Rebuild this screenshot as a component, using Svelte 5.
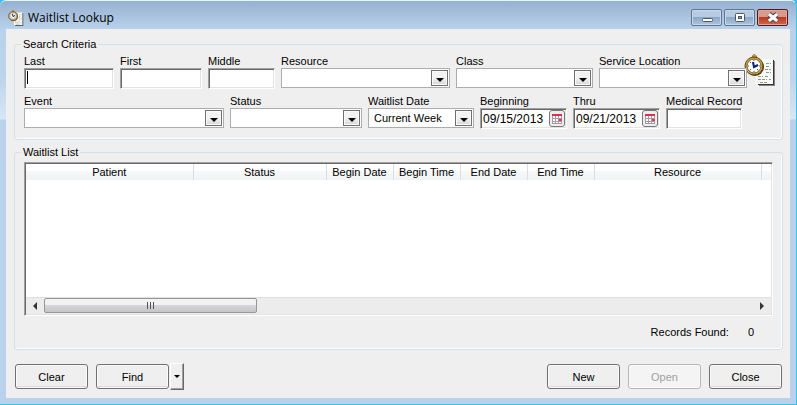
<script lang="ts">
    let last = $state('');
    let first = $state('');
    let middle = $state('');
    let medicalRecord = $state('');
    let beginning = $state('09/15/2013');
    let thru = $state('09/21/2013');
    let waitlistDate = $state('Current Week');
    let recordsFound = $state(0);

    const columns = [
        { title: 'Patient', width: 167 },
        { title: 'Status', width: 133 },
        { title: 'Begin Date', width: 67 },
        { title: 'Begin Time', width: 67 },
        { title: 'End Date', width: 67 },
        { title: 'End Time', width: 67 },
        { title: 'Resource', width: 167 }
    ];
</script>

{#snippet waitlistIcon()}
    <svg class="waitlist-icon" viewBox="0 0 32 32" aria-hidden="true">
        <path d="M15 7h16v25H15z" fill="#85858a" />
        <path d="M14 6h16v25H14z" fill="#33333a" />
        <path d="M12 5h17v25H12z" fill="#f8faf4" />
        <path d="M22 9.500h5M22 12.500h3M21 15.500h6M22 18.500h5M14 22.500h5M21 22.500h4M14 25.500h9M25 25.500h2M16 28.500h8" stroke="#8b9690" stroke-width="1" stroke-dasharray="3 1" />
        <path d="M8 2l2-2 3 2-1 3H9z" fill="#8a6418" />
        <path d="M9 2h3" stroke="#f0cf68" />
        <circle cx="11" cy="13" r="9" fill="#51401c" />
        <circle cx="10" cy="12" r="9" fill="#d6aa4c" stroke="#59420f" stroke-width="1" />
        <circle cx="10" cy="12" r="7" fill="#f8fbff" stroke="#7a5a1a" stroke-width="1" />
        <path d="M10 6v1M10 17v1M4 12h1M15 12h1M6 8l1 1M6 16l1-1M14 16l-1-1" stroke="#555" />
        <path d="M9 8l1 5 4-2" fill="none" stroke="#111a6b" stroke-width="2" />
    </svg>
{/snippet}

{#snippet dropdown(id, label, value)}
    <div class="field">
        <label for={id}>{label}</label>
        <div class="combo">
            <select {id}>
                <option>{value}</option>
            </select>
            <span class="combo-button"><i class="arrow-down"></i></span>
        </div>
    </div>
{/snippet}

{#snippet calendarButton(label)}
    <button class="calendar" type="button" aria-label={label}>
        <svg viewBox="0 0 12 12" aria-hidden="true">
            <path d="M1 1h10v10H1z" fill="#fff" />
            <path d="M1 5.500h10M1 8.500h10M1 10.500h10M1.500 3v8M4.500 3v8M7.500 3v8M10.500 3v8" stroke="#a79aa0" stroke-width="1" />
            <path d="M1 1h10v2H1z" fill="#dd3050" />
            <path d="M8 6h3v2H8z" fill="#e0405c" />
        </svg>
    </button>
{/snippet}

<div class="window">
    <header class="title-bar">
        <span class="small-icon">{@render waitlistIcon()}</span>
        <h1>Waitlist Lookup</h1>
        <div class="window-buttons">
            <button type="button" aria-label="Minimize">
                <svg viewBox="0 0 16 12"><rect x="3.500" y="6.500" width="10" height="3" rx="1" fill="#fff" stroke="#4c5665" /></svg>
            </button>
            <button type="button" aria-label="Restore">
                <svg viewBox="0 0 16 12"><rect x="3.500" y="1.500" width="9" height="8" rx="1" fill="#fff" stroke="#4c5665" /><rect x="6.500" y="4.500" width="3" height="2" fill="#8da9c9" stroke="#4c5665" /></svg>
            </button>
            <button class="close" type="button" aria-label="Close window">
                <svg viewBox="0 0 16 12"><path d="M4 2l8 7M12 2l-8 7" stroke="#5a4b55" stroke-width="5" /><path d="M5 3l6 5M11 3l-6 5" stroke="#fff" stroke-width="3" stroke-linecap="square" /></svg>
            </button>
        </div>
    </header>

    <main>
        <fieldset>
            <legend>Search Criteria</legend>
            <div class="criteria-top">
                <div class="row row-one">
                    <div class="field">
                        <label for="last">Last</label>
                        <div class="text-box">
                            <input id="last" type="text" bind:value={last} />
                            <span class="caret"></span>
                        </div>
                    </div>
                    <div class="field">
                        <label for="first">First</label>
                        <div class="text-box"><input id="first" type="text" bind:value={first} /></div>
                    </div>
                    <div class="field">
                        <label for="middle">Middle</label>
                        <div class="text-box"><input id="middle" type="text" bind:value={middle} /></div>
                    </div>
                    {@render dropdown('resource', 'Resource', '')}
                    {@render dropdown('class', 'Class', '')}
                    {@render dropdown('location', 'Service Location', '')}
                </div>
                {@render waitlistIcon()}
            </div>
            <div class="row row-two">
                {@render dropdown('event', 'Event', '')}
                {@render dropdown('status', 'Status', '')}
                {@render dropdown('waitlist-date', 'Waitlist Date', waitlistDate)}
                <div class="field">
                    <label for="beginning">Beginning</label>
                    <div class="text-box date">
                        <input id="beginning" type="text" bind:value={beginning} />
                        {@render calendarButton('Pick beginning date')}
                    </div>
                </div>
                <div class="field">
                    <label for="thru">Thru</label>
                    <div class="text-box date">
                        <input id="thru" type="text" bind:value={thru} />
                        {@render calendarButton('Pick thru date')}
                    </div>
                </div>
                <div class="field">
                    <label for="medical-record">Medical Record</label>
                    <div class="text-box"><input id="medical-record" type="text" bind:value={medicalRecord} /></div>
                </div>
            </div>
        </fieldset>

        <fieldset class="results">
            <legend>Waitlist List</legend>
            <div class="list">
                <table>
                    <colgroup>
                        {#each columns as column}
                            <col style="width: {column.width}px" />
                        {/each}
                        <col />
                    </colgroup>
                    <thead>
                        <tr>
                            {#each columns as column}
                                <th scope="col">{column.title}</th>
                            {/each}
                            <td></td>
                        </tr>
                    </thead>
                </table>
                <div class="scrollbar">
                    <button type="button" aria-label="Scroll left"><i class="arrow-left"></i></button>
                    <div class="track">
                        <div class="thumb"><i></i><i></i><i></i></div>
                    </div>
                    <button type="button" aria-label="Scroll right"><i class="arrow-right"></i></button>
                </div>
            </div>
            <p class="records">Records Found: <span>{recordsFound}</span></p>
        </fieldset>

        <footer>
            <button class="action" type="button">Clear</button>
            <div class="split">
                <button class="action" type="button">Find</button>
                <button class="split-arrow" type="button" aria-label="Find options"><i class="arrow-down"></i></button>
            </div>
            <span class="spacer"></span>
            <button class="action" type="button">New</button>
            <button class="action" type="button" disabled>Open</button>
            <button class="action" type="button">Close</button>
        </footer>
    </main>
</div>

<style>
    :global(body) {
        margin: 0;
        background: #35c3e6;
    }

    * {
        box-sizing: border-box;
    }

    .window {
        min-height: 100vh;
        display: flex;
        flex-direction: column;
        padding: 0 6px 6px;
        border-right: 1px solid #35c3e6;
        border-bottom: 1px solid #35c3e6;
        border-top: 1px solid #e8f4fb;
        border-radius: 6px 6px 0 0;
        background: linear-gradient(#96b1d0 0, #b9d1ea 28px, #bcd3ec 75px, #d8e6f5 118px, #b9d1ea 119px);
        font-family: "Liberation Sans", Arial, sans-serif;
        font-size: 11px;
        line-height: 14px;
        color: #000;
    }

    button, input, select {
        font: inherit;
        color: inherit;
        margin: 0;
        padding: 0;
    }

    .title-bar {
        height: 28px;
        display: flex;
        align-items: center;
        gap: 4px;
        padding: 5px 0 0 2px;
    }

    .small-icon {
        display: flex;
        width: 16px;
        height: 16px;
    }

    .waitlist-icon {
        flex: none;
        width: 32px;
        height: 32px;
    }

    .small-icon .waitlist-icon {
        width: 16px;
        height: 16px;
    }

    h1 {
        flex: 1;
        margin: 0;
        font-family: "Open Sans", "Noto Sans", sans-serif;
        font-size: 12px;
        font-weight: normal;
        line-height: 16px;
    }

    .window-buttons {
        display: flex;
        gap: 2px;
        padding-right: 2px;
    }

    .window-buttons button {
        display: flex;
        align-items: center;
        justify-content: center;
        width: 31px;
        height: 17px;
        border: 1px solid #5f7690;
        border-radius: 2px;
        background: linear-gradient(#b6cbe2 45%, #8ba8c8 50%, #adc6e0);
        box-shadow: inset 0 0 0 1px #c8d8ea;
    }

    .window-buttons svg {
        width: 16px;
        height: 12px;
    }

    .window-buttons .close {
        border-color: #501c20;
        background: linear-gradient(#d99a8c 45%, #b83a23 50%, #cc6a4e);
        box-shadow: inset 0 0 0 1px #e0a598;
    }

    main {
        flex: 1;
        display: flex;
        flex-direction: column;
        padding: 8px 7px 8px 8px;
        background: #efefef;
    }

    fieldset {
        min-width: 0;
        margin: 0 0 5px;
        padding: 3px 6px 10px 9px;
        border: 1px solid #d5dfe5;
        border-radius: 3px;
        box-shadow: inset -1px -1px 0 #fff;
    }

    legend {
        margin-left: -3px;
        padding: 0 2px;
    }

    .criteria-top {
        display: flex;
        margin-bottom: 5px;
    }

    .criteria-top .waitlist-icon {
        margin-left: -3px;
    }

    .row {
        display: grid;
        gap: 6px;
    }

    .row-one {
        flex: 1;
        grid-template-columns: 90fr 82fr 67fr 169fr 137fr 148fr;
    }

    .row-two {
        grid-template-columns: 200fr 132fr 106fr 87fr 87fr 76fr;
        padding-right: 34px;
    }

    .field {
        min-width: 0;
        display: flex;
        flex-direction: column;
    }

    .field label {
        white-space: nowrap;
    }

    .text-box {
        position: relative;
        display: flex;
        align-items: center;
        height: 21px;
        border: 1px solid;
        border-color: #a0a0a0 #fff #fff #a0a0a0;
        background: #fff;
        box-shadow: inset 1px 1px 0 #696969, inset -1px -1px 0 #e3e3e3;
    }

    .text-box input {
        flex: 1;
        min-width: 0;
        height: 17px;
        padding: 0 2px;
        border: 0;
        outline: 0;
        background: transparent;
    }

    .date input {
        font-size: 12px;
    }

    .caret {
        position: absolute;
        left: 2px;
        top: 2px;
        width: 1px;
        height: 13px;
        background: #000;
    }

    .calendar {
        display: flex;
        flex: none;
        align-items: center;
        justify-content: center;
        width: 16px;
        height: 17px;
        margin-right: 1px;
        border: 1px solid #777;
        border-radius: 3px;
        background: #eee;
    }

    .calendar svg {
        flex: none;
        width: 12px;
        height: 12px;
    }

    .combo {
        position: relative;
        height: 20px;
    }

    .combo select {
        display: block;
        width: 100%;
        height: 20px;
        padding: 0 20px 0 5px;
        border: 1px solid #abadb3;
        border-radius: 0;
        appearance: none;
        background: #fff;
    }

    .combo-button {
        position: absolute;
        top: 2px;
        right: 2px;
        display: flex;
        align-items: center;
        justify-content: center;
        width: 17px;
        height: 16px;
        padding-top: 3px;
        border: 1px solid #707070;
        background: linear-gradient(#f2f2f2 50%, #d6d6d6);
        box-shadow: inset 0 0 0 1px #fafafa;
        pointer-events: none;
    }

    .arrow-down {
        border: 4px solid transparent;
        border-top-color: #000;
        border-bottom: 0;
    }

    .arrow-left {
        border: 4px solid transparent;
        border-right-color: #333;
        border-left: 0;
    }

    .arrow-right {
        border: 4px solid transparent;
        border-left-color: #333;
        border-right: 0;
    }

    .results {
        margin-bottom: 13px;
        padding: 3px 9px 10px;
    }

    .list {
        min-height: 154px;
        display: flex;
        flex-direction: column;
        justify-content: space-between;
        padding: 1px;
        border: 1px solid;
        border-color: #a0a0a0 #fff #fff #a0a0a0;
        background: #fff;
        box-shadow: inset 1px 1px 0 #696969, inset -1px -1px 0 #e3e3e3;
    }

    table {
        width: 100%;
        table-layout: fixed;
        border-collapse: collapse;
    }

    th, td {
        height: 16px;
        padding: 0;
        background: linear-gradient(#fff 40%, #f7f8fa 45%, #f1f2f4);
        font-weight: normal;
        line-height: 16px;
        white-space: nowrap;
    }

    th {
        border-right: 1px solid #dcdfe2;
    }

    .scrollbar {
        display: flex;
        height: 17px;
        background: #ececec;
        border-top: 1px solid #e0e0e0;
    }

    .scrollbar button {
        display: flex;
        align-items: center;
        justify-content: center;
        width: 18px;
        border: 0;
        background: none;
    }

    .track {
        flex: 1;
        display: flex;
    }

    .thumb {
        display: flex;
        align-items: center;
        justify-content: center;
        gap: 2px;
        width: 30%;
        height: 15px;
        border: 1px solid #979797;
        border-radius: 2px;
        background: linear-gradient(#f2f2f2 45%, #d5d5d8 50%, #c5c5c8);
    }

    .thumb i {
        width: 1px;
        height: 7px;
        background: #555;
    }

    .records {
        display: flex;
        justify-content: flex-end;
        gap: 19px;
        margin: 9px 19px 0 0;
    }

    footer {
        display: flex;
        align-items: center;
        gap: 8px;
        margin-top: auto;
        padding: 0 1px;
    }

    .spacer {
        flex: 1;
    }

    .action {
        width: 73px;
        height: 25px;
        border: 1px solid #707070;
        border-radius: 3px;
        background: #efefef;
        box-shadow: inset 0 0 0 1px #fbfbfb, inset 0 -2px 0 #dadada;
    }

    .action:disabled {
        border-color: #b5b5b5;
        background: #f4f4f4;
        box-shadow: inset 0 0 0 1px #fbfbfb;
        color: #a0a0a0;
    }

    .split {
        display: flex;
        align-items: center;
        gap: 1px;
    }

    .split-arrow {
        display: flex;
        align-items: center;
        justify-content: center;
        width: 14px;
        height: 27px;
        border: 1px solid;
        border-color: #fff #696969 #696969 #fff;
        background: #efefef;
        box-shadow: inset -1px -1px 0 #a0a0a0;
    }

    .split-arrow .arrow-down {
        border-width: 3px 3px 0;
    }
</style>
